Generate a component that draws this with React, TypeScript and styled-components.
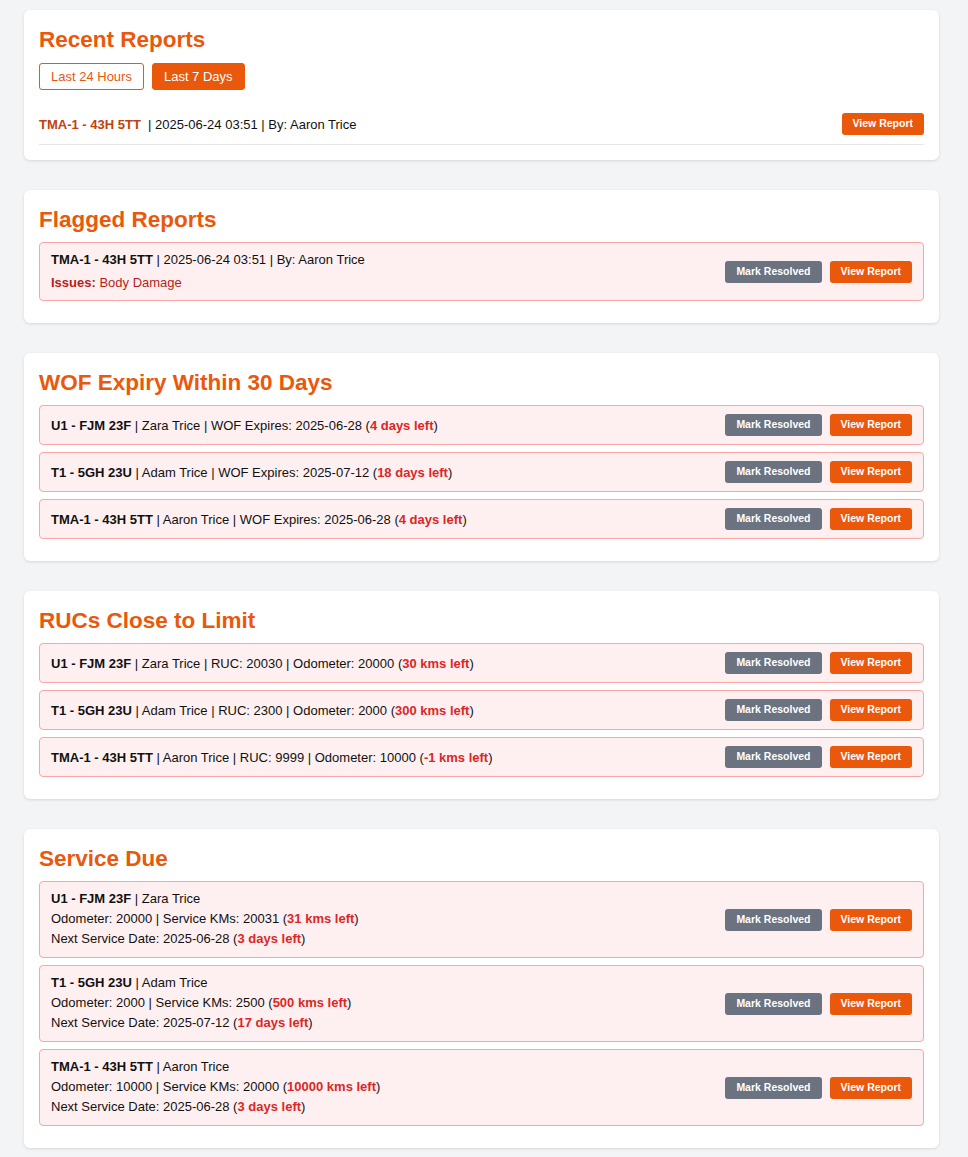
import React from 'react';
import styled, {createGlobalStyle} from "styled-components";

const ORANGE = '#ea580c'

type Vehicle = { plate: string, driver: string }

const U1: Vehicle = {plate: 'U1 - FJM 23F', driver: 'Zara Trice'}
const T1: Vehicle = {plate: 'T1 - 5GH 23U', driver: 'Adam Trice'}
const TMA: Vehicle = {plate: 'TMA-1 - 43H 5TT', driver: 'Aaron Trice'}

const wofItems = [
    {v: U1, date: '2025-06-28', left: '4 days left'},
    {v: T1, date: '2025-07-12', left: '18 days left'},
    {v: TMA, date: '2025-06-28', left: '4 days left'},
]

const rucItems = [
    {v: U1, ruc: 20030, odo: 20000, left: '30 kms left'},
    {v: T1, ruc: 2300, odo: 2000, left: '300 kms left'},
    {v: TMA, ruc: 9999, odo: 10000, left: '-1 kms left'},
]

const serviceItems = [
    {v: U1, odo: 20000, kms: 20031, kmsLeft: '31 kms left', date: '2025-06-28', daysLeft: '3 days left'},
    {v: T1, odo: 2000, kms: 2500, kmsLeft: '500 kms left', date: '2025-07-12', daysLeft: '17 days left'},
    {v: TMA, odo: 10000, kms: 20000, kmsLeft: '10000 kms left', date: '2025-06-28', daysLeft: '3 days left'},
]

function Actions() {
    return (
        <Buttons>
            <SmallButton $variant="gray">Mark Resolved</SmallButton>
            <SmallButton>View Report</SmallButton>
        </Buttons>
    )
}

function App() {
    const [range, setRange] = React.useState<'24h' | '7d'>('7d')

    return (
        <>
            <GlobalStyle/>
            <Page>
                <Card>
                    <Title>Recent Reports</Title>
                    <Filters>
                        <FilterButton $active={range === '24h'} onClick={() => setRange('24h')}>Last 24 Hours</FilterButton>
                        <FilterButton $active={range === '7d'} onClick={() => setRange('7d')}>Last 7 Days</FilterButton>
                    </Filters>
                    <RecentRow>
                        <span>
                            <RecentPlate>{TMA.plate}</RecentPlate>{'\u00a0 | 2025-06-24 03:51 | By: Aaron Trice'}
                        </span>
                        <SmallButton>View Report</SmallButton>
                    </RecentRow>
                </Card>

                <Card>
                    <Title>Flagged Reports</Title>
                    <Item>
                        <ItemText>
                            <Line><b>{TMA.plate}</b> | 2025-06-24 03:51 | By: Aaron Trice</Line>
                            <Issues><b>Issues:</b> Body Damage</Issues>
                        </ItemText>
                        <Actions/>
                    </Item>
                </Card>

                <Card>
                    <Title>WOF Expiry Within 30 Days</Title>
                    {wofItems.map((w, i) => (
                        <Item key={i}>
                            <Line>
                                <b>{w.v.plate}</b> | {w.v.driver} | WOF Expires: {w.date} (<Left>{w.left}</Left>)
                            </Line>
                            <Actions/>
                        </Item>
                    ))}
                </Card>

                <Card>
                    <Title>RUCs Close to Limit</Title>
                    {rucItems.map((r, i) => (
                        <Item key={i}>
                            <Line>
                                <b>{r.v.plate}</b> | {r.v.driver} | RUC: {r.ruc} | Odometer: {r.odo} (<Left>{r.left}</Left>)
                            </Line>
                            <Actions/>
                        </Item>
                    ))}
                </Card>

                <Card>
                    <Title>Service Due</Title>
                    {serviceItems.map((s, i) => (
                        <Item key={i}>
                            <ItemText>
                                <Line><b>{s.v.plate}</b> | {s.v.driver}</Line>
                                <Detail>Odometer: {s.odo} | Service KMs: {s.kms} (<Left>{s.kmsLeft}</Left>)</Detail>
                                <Detail $tight>Next Service Date: {s.date} (<Left>{s.daysLeft}</Left>)</Detail>
                            </ItemText>
                            <Actions/>
                        </Item>
                    ))}
                </Card>
            </Page>
        </>
    );
}

const GlobalStyle = createGlobalStyle`
  body {
    margin: 0;
    background: #f3f4f6;
    font-family: "Liberation Sans", Arial, sans-serif;
    font-size: 13px;
    color: #111;
  }
`

const Page = styled.div`
  padding: 10px 29px 10px 24px;
`

const Card = styled.section`
  background: #fff;
  border-radius: 6px;
  box-shadow: 0 1px 3px rgba(0, 0, 0, 0.12);
  padding: 15px 15px;
  margin-bottom: 30px;
`

const Title = styled.h2`
  margin: 0 0 8px;
  font-size: 22.5px;
  line-height: 29px;
  font-weight: bold;
  color: ${ORANGE};
`

const Filters = styled.div`
  display: flex;
  gap: 8px;
  margin-top: 9px;
  margin-bottom: 14px;
`

const FilterButton = styled.button<{ $active?: boolean }>`
  font-family: inherit;
  font-size: 13px;
  line-height: 15px;
  padding: 5px 11px;
  border: 1px solid ${ORANGE};
  border-radius: 3px;
  background: ${p => p.$active ? ORANGE : '#fff'};
  color: ${p => p.$active ? '#fff' : ORANGE};
  cursor: pointer;
`

const RecentRow = styled.div`
  display: flex;
  align-items: center;
  justify-content: space-between;
  padding: 9px 0;
  border-bottom: 1px solid #e5e7eb;
`

const RecentPlate = styled.b`
  color: #c2410c;
`

const Item = styled.div`
  display: flex;
  align-items: center;
  justify-content: space-between;
  background: #fef0f0;
  border: 1px solid #fca5a5;
  border-radius: 4px;
  padding: 8px 11px;
  margin-bottom: 7px;
`

const ItemText = styled.div`
  display: flex;
  flex-direction: column;
`

const Line = styled.div`
  line-height: 17px;
`

const Issues = styled.div`
  line-height: 17px;
  margin-top: 6px;
  padding-bottom: 1px;
  color: #b91c1c;
`

const Detail = styled.div<{ $tight?: boolean }>`
  line-height: 20px;
  margin-top: ${p => p.$tight ? 0 : 2}px;
`

const Left = styled.b`
  color: #dc2626;
`

const Buttons = styled.div`
  display: flex;
  gap: 8px;
`

const SmallButton = styled.button<{ $variant?: 'gray' }>`
  font-family: inherit;
  font-size: 10.5px;
  font-weight: bold;
  line-height: 13px;
  padding: 4px 11px 5px;
  border: none;
  border-radius: 3px;
  background: ${p => p.$variant === 'gray' ? '#6b7280' : ORANGE};
  color: #fff;
  cursor: pointer;
`

export default App;
